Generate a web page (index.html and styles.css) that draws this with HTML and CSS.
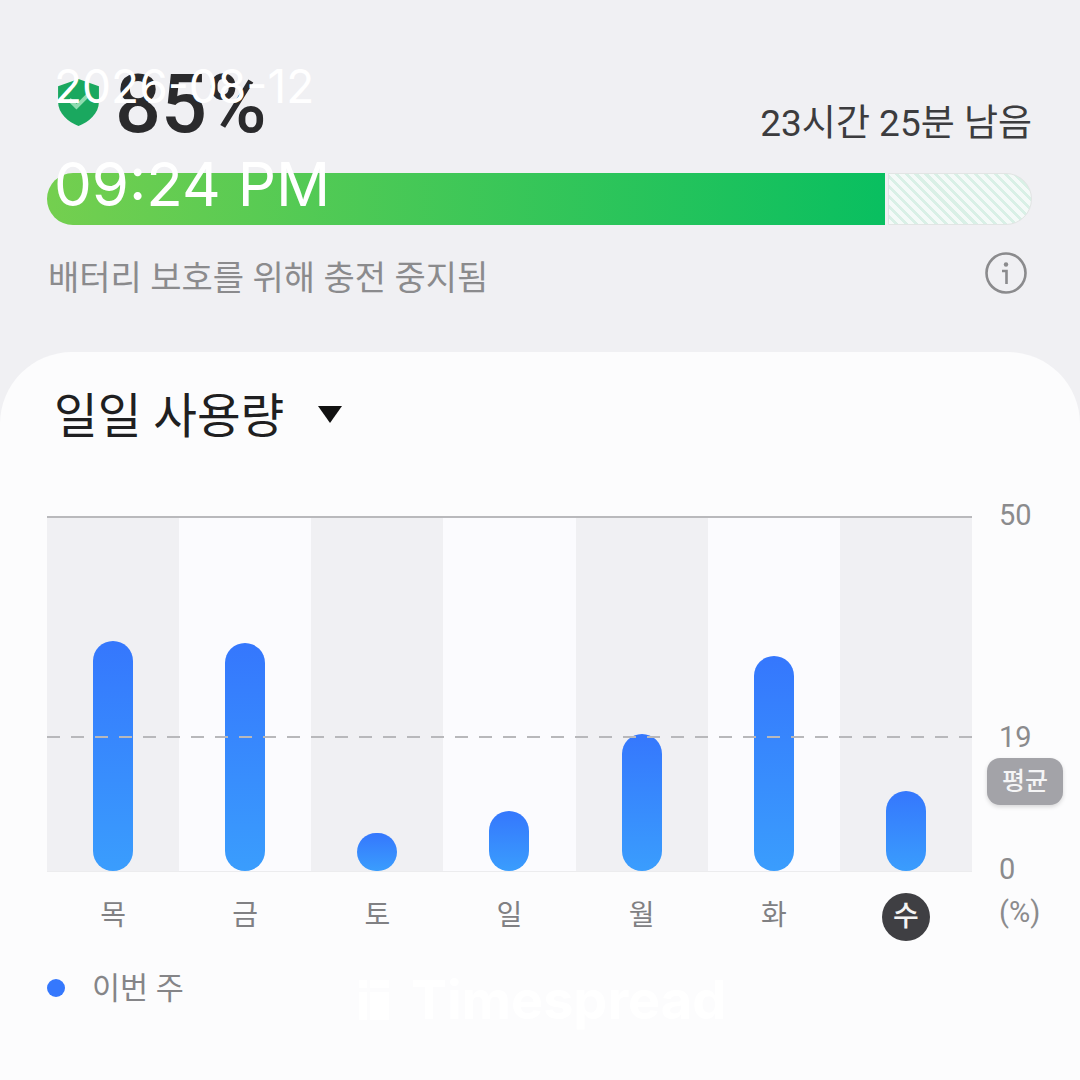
FILE: index.html

```html
<!DOCTYPE html>
<html lang="ko">
<head>
    <meta charset="UTF-8">
    <title>Battery</title>
    <link rel="stylesheet" href="styles.css">
</head>
<body>
    <div class="screen">
        <!-- Battery summary -->
        <section class="summary">
            <div class="summary-head">
                <div class="level">
                    <svg class="shield" viewBox="0 0 40 46">
                        <path d="M20 0 L40 7 V22 C40 34 30 42 20 46 C10 42 0 34 0 22 V7 Z" fill="#1aa85f"/>
                        <path d="M11 20 L18 27 L30 15" fill="none" stroke="#8fdcb0" stroke-width="4"/>
                    </svg>
                    <span class="percent">85%</span>
                </div>
                <span class="remain">23시간 25분 남음</span>
            </div>
            <div class="battery-bar">
                <div class="battery-fill"></div>
                <div class="battery-rest"></div>
            </div>
            <div class="summary-note">
                <span>배터리 보호를 위해 충전 중지됨</span>
                <svg class="info" viewBox="0 0 42 42">
                    <circle cx="21" cy="21" r="19.5" fill="none" stroke="#8b8b8d" stroke-width="2.6"/>
                    <circle cx="21" cy="12.5" r="2.2" fill="#8b8b8d"/>
                    <path d="M17 19 H21.5 V32" fill="none" stroke="#8b8b8d" stroke-width="2.6"/>
                </svg>
            </div>
        </section>

        <!-- Daily usage -->
        <section class="card">
            <div class="card-title">
                <span>일일 사용량</span>
                <i class="caret"></i>
            </div>

            <div class="chart">
                <div class="plot-wrap">
                    <div class="plot">
                        <div class="col"><div class="bar" style="height: 230px"></div></div>
                        <div class="col"><div class="bar" style="height: 228px"></div></div>
                        <div class="col"><div class="bar" style="height: 38px"></div></div>
                        <div class="col"><div class="bar" style="height: 60px"></div></div>
                        <div class="col"><div class="bar" style="height: 137px"></div></div>
                        <div class="col"><div class="bar" style="height: 215px"></div></div>
                        <div class="col"><div class="bar" style="height: 80px"></div></div>
                    </div>
                    <div class="avg-line"></div>
                    <div class="days">
                        <span>목</span>
                        <span>금</span>
                        <span>토</span>
                        <span>일</span>
                        <span>월</span>
                        <span>화</span>
                        <b class="today">수</b>
                    </div>
                </div>
                <div class="axis">
                    <span class="tick tick-max">50</span>
                    <span class="tick tick-avg">19</span>
                    <span class="avg-badge">평균</span>
                    <span class="tick tick-zero">0</span>
                    <span class="tick tick-unit">(%)</span>
                </div>
            </div>

            <div class="legend">
                <i class="dot"></i>
                <span>이번 주</span>
            </div>
        </section>

        <!-- Overlays -->
        <div class="stamp">
            <div class="stamp-date">2026-08-12</div>
            <div class="stamp-time">09:24 PM</div>
        </div>
        <div class="watermark">
            <svg class="watermark-icon" viewBox="0 0 30 40">
                <rect x="0" y="0" width="8" height="8" fill="#fff"/>
                <rect x="0" y="12" width="8" height="28" fill="#fff"/>
                <rect x="11" y="0" width="19" height="8" fill="#fff"/>
                <rect x="11" y="12" width="19" height="28" fill="#fff"/>
            </svg>
            <span>Timespread</span>
        </div>
    </div>
</body>
</html>
```

FILE: styles.css

```css
/* General Styles */
* {
    box-sizing: border-box;
}

body {
    margin: 0;
    padding: 0;
    background: #f0f0f3;
    font-family: "Roboto", "Noto Sans CJK KR", sans-serif;
}

.screen {
    position: relative;
    width: 1080px;
    height: 1080px;
    overflow: hidden;
    background: #f0f0f3;
}

/* Battery summary */
.summary {
    height: 352px;
    padding: 68px 48px 0 47px;
}

.summary-head {
    display: flex;
    justify-content: space-between;
    align-items: flex-end;
    height: 80px;
}

.level {
    display: flex;
    align-items: center;
    gap: 16px;
    padding-left: 11px;
    margin-bottom: 3px;
}

.shield {
    width: 41px;
    height: 47px;
    margin-top: -5px;
}

.percent {
    font-size: 81px;
    line-height: 80px;
    font-weight: 500;
    color: #2a2a2c;
}

.remain {
    font-size: 37px;
    line-height: 44px;
    color: #3c3c3e;
    margin-bottom: 2px;
}

.battery-bar {
    display: flex;
    height: 52px;
    margin-top: 25px;
    gap: 3px;
}

.battery-fill {
    width: 838px;
    border-radius: 26px 0 0 26px;
    background: linear-gradient(90deg, #74cf4f, #09bf60);
}

.battery-rest {
    flex: 1;
    border: 1px solid #e2e5e4;
    border-radius: 0 26px 26px 0;
    background: repeating-linear-gradient(45deg, #f4faf8 0, #f4faf8 4px, #d9f0e6 4px, #d9f0e6 7px);
}

.summary-note {
    display: flex;
    justify-content: space-between;
    align-items: center;
    margin-top: 31px;
    padding-left: 1px;
    padding-right: 5px;
    font-size: 34px;
    line-height: 44px;
    color: #8b8b8d;
}

.info {
    width: 42px;
    height: 42px;
    margin-top: -10px;
}

/* Card */
.card {
    height: 728px;
    padding: 40px 48px 0 47px;
    background: #fcfcfd;
    border-radius: 72px 72px 0 0;
}

.card-title {
    display: flex;
    align-items: center;
    gap: 34px;
    padding-left: 7px;
    height: 50px;
    font-size: 47.5px;
    line-height: 50px;
    color: #1f1f21;
}

.caret {
    width: 0;
    height: 0;
    margin-top: -6px;
    border-left: 12.5px solid transparent;
    border-right: 12.5px solid transparent;
    border-top: 17px solid #111;
}

/* Chart */
.chart {
    display: flex;
    margin-top: 74px;
}

.plot-wrap {
    position: relative;
    width: 925px;
}

.plot {
    display: grid;
    grid-template-columns: repeat(7, 1fr);
    height: 356px;
    border-top: 2px solid #b9b9bc;
    border-bottom: 1px solid #ececee;
}

.col {
    display: flex;
    justify-content: center;
    align-items: flex-end;
    background: #f0f0f3;
}

.col:nth-child(even) {
    background: #fbfbfe;
}

.bar {
    width: 40px;
    border-radius: 20px;
    background: linear-gradient(180deg, #3577fd, #3a9dfd);
}

/* long dashes, border dashed is too short here */
.avg-line {
    position: absolute;
    left: 0;
    right: 0;
    top: 220px;
    height: 2px;
    background: repeating-linear-gradient(90deg, #b8b8bb 0, #b8b8bb 13px, transparent 13px, transparent 24px);
}

.days {
    display: grid;
    grid-template-columns: repeat(7, 1fr);
    height: 90px;
    align-items: center;
    justify-items: center;
    font-size: 28px;
    color: #808083;
}

.days span {
    margin-top: -8px;
}

.today {
    width: 48px;
    height: 48px;
    border-radius: 50%;
    background: #3f3f43;
    color: #f4f4f4;
    font-weight: 500;
    line-height: 48px;
    text-align: center;
}

/* Axis on the right side */
.axis {
    position: relative;
    flex: 1;
    font-size: 29px;
    line-height: 36px;
    color: #8b8b8d;
}

.tick {
    position: absolute;
    left: 27px;
}

.tick-max {
    top: -19px;
}

.tick-avg {
    top: 203px;
}

.tick-zero {
    top: 335px;
}

.tick-unit {
    top: 378px;
}

.avg-badge {
    position: absolute;
    left: 15px;
    top: 242px;
    width: 76px;
    height: 47px;
    border-radius: 13px;
    background: #a3a3a8;
    box-shadow: 0 2px 4px rgba(0, 0, 0, 0.15);
    color: #f5f5f6;
    font-size: 25px;
    font-weight: 500;
    line-height: 47px;
    text-align: center;
}

/* Legend */
.legend {
    display: flex;
    align-items: center;
    gap: 27px;
    margin-top: 7px;
    font-size: 30.5px;
    line-height: 40px;
    color: #858588;
}

.dot {
    width: 18px;
    height: 18px;
    margin-top: -2px;
    border-radius: 50%;
    background: #3578fd;
}

/* Overlays */
.stamp {
    position: absolute;
    left: 54px;
    top: 56px;
    color: #fff;
    font-family: "Inter", sans-serif;
}

.stamp-date {
    font-size: 46px;
    line-height: 60px;
}

.stamp-time {
    margin-top: 34px;
    font-size: 60px;
    line-height: 68px;
}

.watermark {
    position: absolute;
    left: 355px;
    top: 972px;
    display: flex;
    align-items: center;
    gap: 18px;
    color: #fff;
    font-family: "Inter", sans-serif;
    font-size: 54px;
    font-weight: 700;
    line-height: 56px;
}

.watermark-icon {
    width: 38px;
    height: 40px;
}
```
